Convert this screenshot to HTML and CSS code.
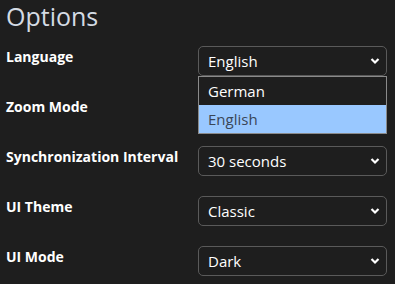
FILE: index.html
```html
<!DOCTYPE html>
<html>
<head>
<meta charset="utf-8">
<link rel="stylesheet" href="styles.css">
</head>
<body>
<div class="page">
  <h1 class="title">Options</h1>
  <div class="rows">
    <div class="row">
      <div class="label">Language</div>
      <div class="control">
        <div class="select">
          <span class="value">English</span>
          <svg class="chev" width="10" height="8" viewBox="0 0 10 8"><path d="M1.5 2 L5 5.5 L8.5 2" fill="none" stroke="#fff" stroke-width="2.2"/></svg>
        </div>
        <div class="dropdown">
          <div class="option">German</div>
          <div class="option selected">English</div>
        </div>
      </div>
    </div>
    <div class="row">
      <div class="label">Zoom Mode</div>
      <div class="control">
        <div class="select">
          <span class="value"></span>
          <svg class="chev" width="10" height="8" viewBox="0 0 10 8"><path d="M1.5 2 L5 5.5 L8.5 2" fill="none" stroke="#fff" stroke-width="2.2"/></svg>
        </div>
      </div>
    </div>
    <div class="row">
      <div class="label">Synchronization Interval</div>
      <div class="control">
        <div class="select">
          <span class="value">30 seconds</span>
          <svg class="chev" width="10" height="8" viewBox="0 0 10 8"><path d="M1.5 2 L5 5.5 L8.5 2" fill="none" stroke="#fff" stroke-width="2.2"/></svg>
        </div>
      </div>
    </div>
    <div class="row">
      <div class="label">UI Theme</div>
      <div class="control">
        <div class="select">
          <span class="value">Classic</span>
          <svg class="chev" width="10" height="8" viewBox="0 0 10 8"><path d="M1.5 2 L5 5.5 L8.5 2" fill="none" stroke="#fff" stroke-width="2.2"/></svg>
        </div>
      </div>
    </div>
    <div class="row">
      <div class="label">UI Mode</div>
      <div class="control">
        <div class="select">
          <span class="value">Dark</span>
          <svg class="chev" width="10" height="8" viewBox="0 0 10 8"><path d="M1.5 2 L5 5.5 L8.5 2" fill="none" stroke="#fff" stroke-width="2.2"/></svg>
        </div>
      </div>
    </div>
  </div>
</div>
</body>
</html>
```
FILE: styles.css
```css
html, body {
  margin: 0;
  padding: 0;
  background: #1e1e1e;
}
body {
  width: 395px;
  height: 284px;
  overflow: hidden;
  font-family: "Open Sans", "Noto Sans", sans-serif;
  color: #ffffff;
}
.page {
  padding: 0 8px 0 6px;
}
.title {
  margin: 0;
  font-size: 25px;
  font-weight: 400;
  line-height: 32px;
  color: #d4dbe4;
  height: 46px;
}
.rows {
  display: flex;
  flex-direction: column;
  gap: 20px;
}
.row {
  display: flex;
  align-items: flex-start;
  height: 30px;
}
.label {
  width: 192px;
  font-size: 14px;
  font-weight: 700;
  line-height: 19px;
  padding-top: 1px;
}
.control {
  position: relative;
  width: 189px;
}
.select {
  box-sizing: border-box;
  height: 30px;
  border: 1px solid #5a5a5a;
  border-radius: 5px;
  background: #1e1e1e;
  display: flex;
  align-items: center;
  justify-content: space-between;
  padding: 0 6px 0 9px;
  font-size: 15px;
}
.chev {
  display: block;
}
.dropdown {
  position: absolute;
  left: 0;
  top: 30px;
  width: 189px;
  box-sizing: border-box;
  border: 1px solid #8a8a8a;
  background: #1e1e1e;
  z-index: 2;
}
.option {
  height: 28px;
  line-height: 28px;
  padding-left: 9px;
  font-size: 15px;
  color: #ffffff;
}
.option.selected {
  background: #99c8ff;
  color: #3a4657;
}
```
